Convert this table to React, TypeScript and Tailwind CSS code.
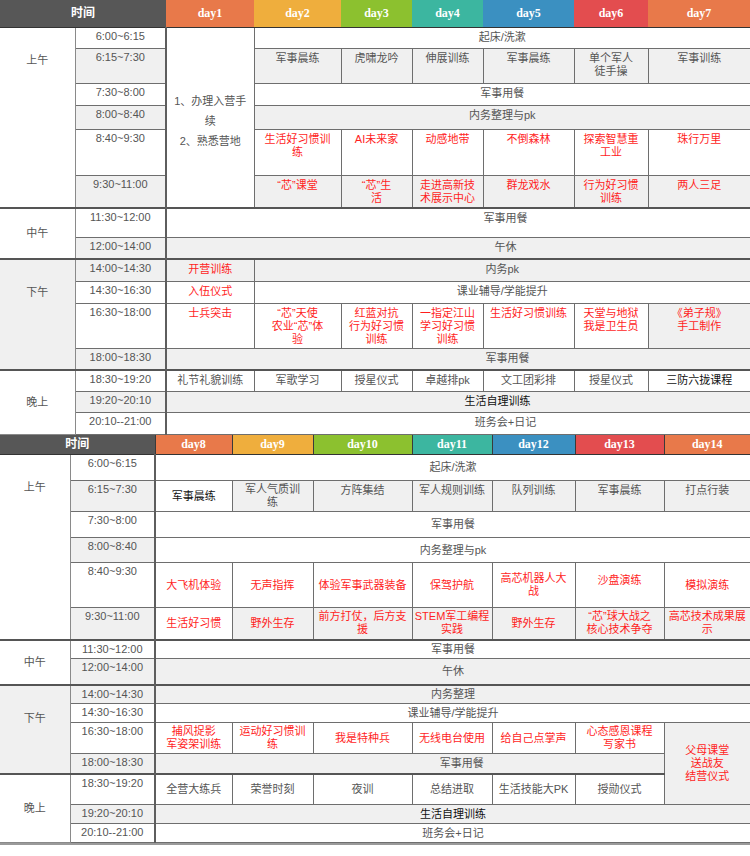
import React from "react";
import clsx from "clsx";

type Cell = {
  t: React.ReactNode;
  cs?: number;
  rs?: number;
  c?: "red" | "dark";
  g?: boolean;
  v?: "top" | "mid";
  x?: string;
};

type Row = {
  h: string;
  time: string;
  tg?: boolean;
  sep?: boolean;
  period?: { label: string; rs: number; g?: boolean; top?: boolean };
  cells: Cell[];
};

const L = (...lines: string[]) =>
  lines.map((l, i) => (
    <React.Fragment key={i}>
      {i > 0 && <br />}
      {l}
    </React.Fragment>
  ));

const ORANGE = "bg-[#e8794a]";
const YELLOW = "bg-[#efae3d]";
const GREEN = "bg-[#8cc12f]";
const TEAL = "bg-[#3cb6a0]";
const BLUE = "bg-[#3b90c1]";
const RED = "bg-[#e34d4f]";

const week1Days = [
  ["day1", ORANGE],
  ["day2", YELLOW],
  ["day3", GREEN],
  ["day4", TEAL],
  ["day5", BLUE],
  ["day6", RED],
  ["day7", ORANGE],
];

const week2Days = [
  ["day8", ORANGE],
  ["day9", YELLOW],
  ["day10", GREEN],
  ["day11", TEAL],
  ["day12", BLUE],
  ["day13", RED],
  ["day14", ORANGE],
];

const week1Cols = ["w-[75px]", "w-[91px]", "w-[88px]", "w-[87px]", "w-[71px]", "w-[71px]", "w-[91px]", "w-[74px]", "w-[102px]"];
const week2Cols = ["w-[70px]", "w-[85px]", "w-[77px]", "w-[81px]", "w-[99px]", "w-[80px]", "w-[83px]", "w-[89px]", "w-[86px]"];

const week1: Row[] = [
  {
    h: "h-[21px]",
    time: "6:00~6:15",
    period: { label: "上午", rs: 6, top: true },
    cells: [
      { t: L("1、办理入营手", "续", "2、熟悉营地"), rs: 6, v: "mid", x: "pt-[8px]" },
      { t: "起床/洗漱", cs: 6 },
    ],
  },
  {
    h: "h-[35px]",
    time: "6:15~7:30",
    tg: true,
    cells: [
      { t: "军事晨练", g: true },
      { t: "虎啸龙吟", g: true },
      { t: "伸展训练", g: true },
      { t: "军事晨练", g: true },
      { t: L("单个军人", "徒手操"), g: true },
      { t: "军事训练", g: true },
    ],
  },
  { h: "h-[22px]", time: "7:30~8:00", cells: [{ t: "军事用餐", cs: 6 }] },
  { h: "h-[24px]", time: "8:00~8:40", tg: true, cells: [{ t: "内务整理与pk", cs: 6, g: true }] },
  {
    h: "h-[46px]",
    time: "8:40~9:30",
    cells: [
      { t: L("生活好习惯训", "练"), c: "red" },
      { t: "AI未来家", c: "red" },
      { t: "动感地带", c: "red" },
      { t: "不倒森林", c: "red" },
      { t: L("探索智慧重", "工业"), c: "red" },
      { t: "珠行万里", c: "red" },
    ],
  },
  {
    h: "h-[33px]",
    time: "9:30~11:00",
    tg: true,
    cells: [
      { t: "“芯”课堂", c: "red", g: true },
      { t: L("“芯”生", "活"), c: "red", g: true },
      { t: L("走进高新技", "术展示中心"), c: "red", g: true },
      { t: "群龙戏水", c: "red", g: true },
      { t: L("行为好习惯", "训练"), c: "red", g: true },
      { t: "两人三足", c: "red", g: true },
    ],
  },
  {
    h: "h-[29px]",
    time: "11:30~12:00",
    sep: true,
    period: { label: "中午", rs: 2 },
    cells: [{ t: "军事用餐", cs: 7, x: "pl-[96px]" }],
  },
  { h: "h-[22px]", time: "12:00~14:00", tg: true, cells: [{ t: "午休", cs: 7, g: true, x: "pl-[96px]" }] },
  {
    h: "h-[22px]",
    time: "14:00~14:30",
    tg: true,
    sep: true,
    period: { label: "下午", rs: 4, g: true, top: true },
    cells: [
      { t: "开营训练", c: "red", g: true },
      { t: "内务pk", cs: 6, g: true },
    ],
  },
  {
    h: "h-[22px]",
    time: "14:30~16:30",
    cells: [
      { t: "入伍仪式", c: "red" },
      { t: "课业辅导/学能提升", cs: 6 },
    ],
  },
  {
    h: "h-[45px]",
    time: "16:30~18:00",
    cells: [
      { t: "士兵突击", c: "red" },
      { t: L("“芯”天使", "农业“芯”体", "验"), c: "red" },
      { t: L("红蓝对抗", "行为好习惯", "训练"), c: "red" },
      { t: L("一指定江山", "学习好习惯", "训练"), c: "red" },
      { t: "生活好习惯训练", c: "red" },
      { t: L("天堂与地狱", "我是卫生员"), c: "red" },
      { t: L("《弟子规》", "手工制作"), c: "red", g: true },
    ],
  },
  { h: "h-[22px]", time: "18:00~18:30", tg: true, cells: [{ t: "军事用餐", cs: 7, g: true, x: "pl-[100px]" }] },
  {
    h: "h-[21px]",
    time: "18:30~19:20",
    sep: true,
    period: { label: "晚上", rs: 3 },
    cells: [
      { t: "礼节礼貌训练" },
      { t: "军歌学习" },
      { t: "授星仪式" },
      { t: "卓越排pk" },
      { t: "文工团彩排" },
      { t: "授星仪式" },
      { t: "三防六拢课程", c: "dark" },
    ],
  },
  { h: "h-[21px]", time: "19:20~20:10", tg: true, cells: [{ t: "生活自理训练", cs: 7, g: true, c: "dark", x: "pl-[80px]" }] },
  { h: "h-[22px]", time: "20:10--21:00", cells: [{ t: "班务会+日记", cs: 7, x: "pl-[96px]" }] },
];

const week2: Row[] = [
  {
    h: "h-[26px]",
    time: "6:00~6:15",
    period: { label: "上午", rs: 6, top: true },
    cells: [{ t: "起床/洗漱", cs: 7 }],
  },
  {
    h: "h-[31px]",
    time: "6:15~7:30",
    tg: true,
    cells: [
      { t: "军事晨练", c: "dark" },
      { t: L("军人气质训", "练"), g: true },
      { t: "方阵集结", g: true, v: "top" },
      { t: "军人规则训练", g: true, v: "top" },
      { t: "队列训练", g: true, v: "top" },
      { t: "军事晨练", g: true, v: "top" },
      { t: "打点行装", g: true, v: "top" },
    ],
  },
  { h: "h-[26px]", time: "7:30~8:00", cells: [{ t: "军事用餐", cs: 7 }] },
  { h: "h-[25px]", time: "8:00~8:40", tg: true, cells: [{ t: "内务整理与pk", cs: 7 }] },
  {
    h: "h-[45px]",
    time: "8:40~9:30",
    cells: [
      { t: "大飞机体验", c: "red" },
      { t: "无声指挥", c: "red" },
      { t: "体验军事武器装备", c: "red" },
      { t: "保驾护航", c: "red" },
      { t: L("高芯机器人大", "战"), c: "red" },
      { t: "沙盘演练", c: "red", x: "pb-[10px]" },
      { t: "模拟演练", c: "red" },
    ],
  },
  {
    h: "h-[32px]",
    time: "9:30~11:00",
    tg: true,
    cells: [
      { t: "生活好习惯", c: "red" },
      { t: "野外生存", c: "red", g: true },
      { t: L("前方打仗，后方支", "援"), c: "red", g: true },
      { t: L("STEM军工编程", "实践"), c: "red", g: true },
      { t: "野外生存", c: "red", g: true },
      { t: L("“芯”球大战之", "核心技术争夺"), c: "red", g: true },
      { t: L("高芯技术成果展", "示"), c: "red", g: true },
    ],
  },
  {
    h: "h-[19px]",
    time: "11:30~12:00",
    sep: true,
    period: { label: "中午", rs: 2 },
    cells: [{ t: "军事用餐", cs: 7 }],
  },
  { h: "h-[26px]", time: "12:00~14:00", tg: true, cells: [{ t: "午休", cs: 7, g: true }] },
  {
    h: "h-[19px]",
    time: "14:00~14:30",
    tg: true,
    sep: true,
    period: { label: "下午", rs: 4, g: true, top: true },
    cells: [{ t: "内务整理", cs: 7, g: true }],
  },
  { h: "h-[19px]", time: "14:30~16:30", cells: [{ t: "课业辅导/学能提升", cs: 7 }] },
  {
    h: "h-[31px]",
    time: "16:30~18:00",
    cells: [
      { t: L("捕风捉影", "军姿架训练"), c: "red" },
      { t: L("运动好习惯训", "练"), c: "red" },
      { t: "我是特种兵", c: "red" },
      { t: "无线电台使用", c: "red" },
      { t: "给自己点掌声", c: "red" },
      { t: L("心态感恩课程", "写家书"), c: "red" },
      { t: L("父母课堂", "送战友", "结营仪式"), c: "red", g: true, rs: 3 },
    ],
  },
  { h: "h-[20px]", time: "18:00~18:30", tg: true, cells: [{ t: "军事用餐", cs: 6, g: true, x: "pl-[106px]" }] },
  {
    h: "h-[31px]",
    time: "18:30~19:20",
    sep: true,
    period: { label: "晚上", rs: 3 },
    cells: [
      { t: "全营大练兵" },
      { t: "荣誉时刻" },
      { t: "夜训" },
      { t: "总结进取" },
      { t: "生活技能大PK" },
      { t: "授勋仪式" },
    ],
  },
  { h: "h-[19px]", time: "19:20~20:10", tg: true, cells: [{ t: "生活自理训练", cs: 7, g: true, c: "dark" }] },
  { h: "h-[19px]", time: "20:10--21:00", cells: [{ t: "班务会+日记", cs: 7 }] },
];

function Schedule({
  cols,
  days,
  rows,
  head,
  valign,
  dividers,
}: {
  cols: string[];
  days: string[][];
  rows: Row[];
  head: string;
  valign: "top" | "mid";
  dividers?: boolean;
}) {
  return (
    <table className="w-[750px] table-fixed border-collapse [&_td:first-child]:border-l-0 [&_td:last-child]:border-r-0">
      <colgroup>
        {cols.map((c, i) => (
          <col key={i} className={c} />
        ))}
      </colgroup>
      <thead>
        <tr className={head}>
          <th colSpan={2} className="bg-[#575757] border-b border-b-[#333] text-[12px] font-bold text-white">
            时间
          </th>
          {days.map(([d, bg]) => (
            <th
              key={d}
              className={clsx(
                bg,
                "border-b border-b-[#333] font-['Liberation_Serif',serif] text-[12px] font-bold text-white",
                dividers && "border-l border-l-[#3a3a3a]"
              )}
            >
              {d}
            </th>
          ))}
        </tr>
      </thead>
      <tbody>
        {rows.map((r) => (
          <tr key={r.time} className={clsx(r.h, r.sep && "[&>td]:border-t-2 [&>td]:border-t-[#555]")}>
            {r.period && (
              <td
                rowSpan={r.period.rs}
                className={clsx(
                  "border border-[#8a8a8a] text-center text-[#555]",
                  r.period.g ? "bg-[#f0f0f0]" : "bg-white",
                  r.period.top ? "align-top pt-[26px]" : "align-middle"
                )}
              >
                {r.period.label}
              </td>
            )}
            <td
              className={clsx(
                "border border-[#6e6e6e] border-r-2 border-r-[#5e5e5e] text-center align-top pt-[2px] text-[#555]",
                r.tg ? "bg-[#f0f0f0]" : "bg-white"
              )}
            >
              {r.time}
            </td>
            {r.cells.map((c, i) => {
              const v = c.v ?? valign;
              return (
                <td
                  key={i}
                  colSpan={c.cs}
                  rowSpan={c.rs}
                  className={clsx(
                    "border border-[#6e6e6e] px-[2px] text-center whitespace-nowrap",
                    c.g ? "bg-[#f0f0f0]" : "bg-white",
                    c.c === "red" ? "text-[#ff1e1e]" : c.c === "dark" ? "text-[#111]" : "text-[#555]",
                    v === "top" ? "align-top pt-[3px]" : "align-middle",
                    c.rs === 6 && "leading-[20px]",
                    c.x
                  )}
                >
                  {c.t}
                </td>
              );
            })}
          </tr>
        ))}
      </tbody>
    </table>
  );
}

export default function App() {
  return (
    <div className="w-[750px] h-[856px] bg-white font-['Liberation_Sans','Noto_Sans_CJK_SC',sans-serif] text-[11px] leading-[13px]">
      <Schedule cols={week1Cols} days={week1Days} rows={week1} head="h-[27px]" valign="top" />
      <div className="border-b-2 border-b-[#9a9a9a]">
        <Schedule cols={week2Cols} days={week2Days} rows={week2} head="h-[20px]" valign="mid" dividers />
      </div>
    </div>
  );
}
